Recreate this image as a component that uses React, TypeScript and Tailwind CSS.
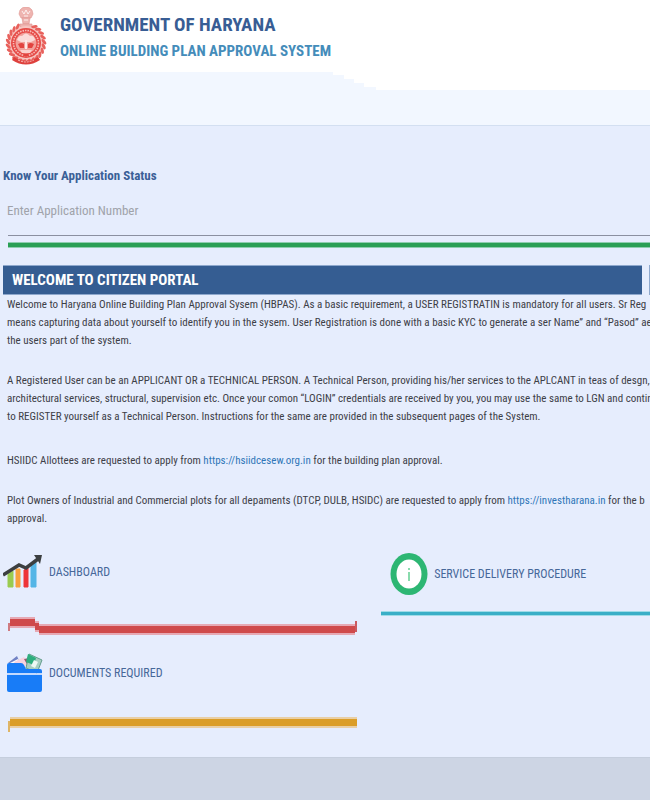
import React from "react";

function Emblem() {
  const leaves = Array.from({ length: 22 }, (_, i) => {
    const a = ((-62 + i * 14.5) * Math.PI) / 180;
    return { x: 21 + 18 * Math.cos(a), y: 36 + 18.5 * Math.sin(a), r: -62 + i * 14.5 + 55 };
  }).filter((l) => l.y > 19);
  return (
    <svg width="42" height="58" viewBox="0 0 42 58" role="img" aria-label="Haryana emblem">
      <g fill="#eeb4b0" stroke="#df9690" strokeWidth="0.6">
        <path d="M15 3q2-3 6-3t6 3l1 4-2 4H16l-2-4z" />
        <path d="M17 11h8l-1 6h-6z" />
        <path d="M15 17h12v3H15z" />
      </g>
      <path d="M17 4l2 3 2-4 2 4 2-3M19 9h4M19 13h4" stroke="#fff" strokeWidth="0.8" fill="none" />
      <circle cx="21" cy="37" r="18" fill="#f7c5c1" />
      <g fill="#e8615c">
        {leaves.map((l, i) => (
          <ellipse key={i} cx={l.x} cy={l.y} rx="3.2" ry="1.5" transform={`rotate(${l.r} ${l.x} ${l.y})`} />
        ))}
      </g>
      <circle cx="21" cy="36" r="15" fill="#e64b47" />
      <circle cx="21" cy="36" r="12.5" fill="none" stroke="#f7bcb8" strokeWidth="1.6" strokeDasharray="1.5 1" />
      <circle cx="21" cy="36" r="10.5" fill="#f2a09b" />
      <path d="M12 33q2-5 5-4 4-5 8 0 4-1 5 4l-4 2H16z" fill="#fbdcd9" />
      <path d="M13 37q4-2 6 0v4h-4zM29 37q-4-2-6 0v4h4z" fill="#e2433f" />
      <path d="M20 33h2v9h-2z" fill="#fde9e7" />
      <path d="M15 43h12l-2 3h-8z" fill="#fbd0cd" />
      <path d="M19 47h4v2h-4z" fill="#e2433f" />
      <path d="M9 50q12 8 24 0l2 3q-14 9-28 0z" fill="#de413d" />
      <path d="M13 53q8 4 16 0" stroke="#f9c2bf" strokeDasharray="2 1" fill="none" />
    </svg>
  );
}

function ChartIcon() {
  return (
    <svg width="40" height="34" viewBox="0 0 40 34" aria-hidden="true">
      <path d="M5 19l5-3v16H5z" fill="#9acb50" stroke="#9acb50" />
      <path d="M13 14h4v18h-4z" fill="#f8a13c" stroke="#f8a13c" />
      <path d="M21 15l4-2v19h-4z" fill="#ee3438" stroke="#ee3438" />
      <path d="M28 11l5-4v25h-5z" fill="#55b5e6" stroke="#55b5e6" />
      <path d="M0 20L16 10l7 3L35 4" fill="none" stroke="#3c3f40" strokeWidth="3.5" />
      <path d="M31 0h8l-2 9z" fill="#3c3f40" />
    </svg>
  );
}

function FolderIcon() {
  return (
    <svg width="38" height="40" viewBox="0 0 38 40" aria-hidden="true">
      <path d="M2 10l9-7 3 7z" fill="#7182c4" />
      <path d="M4 10l8-4 3 5z" fill="#fff" />
      <path d="M8 9l10-5 6 9H10z" fill="#f8d3df" />
      <path d="M18 6l5-1-1 8z" fill="#955b72" />
      <path d="M23 1l13 6-5 13-11-5z" fill="#a8cfc2" stroke="#669e8f" />
      <path d="M22 1l8 4-2 7-8-3z" fill="#2dae7e" />
      <path d="M28 7l4 2-3 6-4-2z" fill="#eef8f4" />
      <path d="M1 20V12q0-2 2-2h12q2 0 3 2l2 4h14q2 0 2 2v2z" fill="#187cf7" />
      <path d="M1 22h35v15q0 2-2 2H3q-2 0-2-2z" fill="#187cf7" />
      <path d="M1 21h35" stroke="#9fc5ff" strokeWidth="1.2" />
    </svg>
  );
}

function InfoIcon() {
  return (
    <svg width="38" height="42" viewBox="0 0 38 42" aria-hidden="true">
      <ellipse cx="19" cy="21" rx="18.5" ry="21" fill="#2db673" />
      <ellipse cx="19" cy="21" rx="12.5" ry="14.5" fill="#fff" />
      <path d="M19 15v2M19 19v9" stroke="#8adbad" strokeWidth="2" />
    </svg>
  );
}

const redEdge = "border-y-2 border-[#e6a9b4] bg-[#cf4a4b]";
const goldEdge = "border-y-2 border-[#e9cfa5] bg-[#db9d27]";

export default function App() {
  return (
    <div className="min-h-screen overflow-hidden bg-[#e6edfd] font-['Roboto_Condensed','Roboto',sans-serif] text-[#3d4047]">
      <header className="border-b border-[#d3dff1] bg-[#f2f7ff]">
        <div className="flex h-[72px] items-start gap-[13px] bg-white pl-[5px] pt-[7px]">
          <Emblem />
          <div className="whitespace-nowrap pt-1">
            <h1 className="text-[19px] font-bold leading-7 text-[#385d94]">GOVERNMENT OF HARYANA</h1>
            <p className="text-[15px] font-bold leading-6 text-[#448cba]">ONLINE BUILDING PLAN APPROVAL SYSTEM</p>
          </div>
        </div>
        <div className="flex h-[53px] items-start">
          <div className="w-[333px]" />
          <svg width="44" height="18" viewBox="0 0 44 18" aria-hidden="true">
            <path d="M0 0h44v18h-1v-3H31v-4H21V7H11V3H0z" fill="#fff" />
          </svg>
          <div className="h-[18px] flex-1 bg-white" />
        </div>
      </header>

      <main>
        <form className="pt-10">
          <label htmlFor="application" className="block pl-[3px] text-[13px] font-bold leading-5 text-[#3a6097]">
            Know Your Application Status
          </label>
          <div className="ml-2 border-b border-[#8b90a1] pb-3 pt-[11px]">
            <input
              id="application"
              type="text"
              placeholder="Enter Application Number"
              className="-ml-px block h-[26px] w-full bg-transparent text-[13px] outline-none placeholder:text-[#a0a3aa]"
            />
          </div>
        </form>
        <div className="ml-2 mt-1.5 h-1.5 border-y border-[#8fcdb0] bg-[#2a9f55]" />

        <div className="mt-[17px] flex gap-[7px] pl-[3px]">
          <h2 className="h-[30px] flex-1 border-y border-[#8ea8cd] bg-[#355d92] pl-[9px] text-[15px] font-bold leading-7 text-white">
            WELCOME TO CITIZEN PORTAL
          </h2>
          <div className="h-[30px] w-px bg-[#8ea8cd]" />
        </div>

        <div className="whitespace-nowrap pl-[7px] pt-px text-[11px] leading-[18px]">
          <p>
            Welcome to Haryana Online Building Plan Approval Sysem (HBPAS). As a basic requirement, a USER REGISTRATIN is mandatory for all users. Sr Reg
            <br />
            means capturing data about yourself to identify you in the sysem. User Registration is done with a basic KYC to generate a ser Name” and “Pasod” ae
            <br />
            the users part of the system.
          </p>
          <p className="mt-[22px]">
            A Registered User can be an APPLICANT OR a TECHNICAL PERSON. A Technical Person, providing his/her services to the APLCANT in teas of desgn,
            <br />
            architectural services, structural, supervision etc. Once your comon “LOGIN” credentials are received by you, you may use the same to LGN and contin
            <br />
            to REGISTER yourself as a Technical Person. Instructions for the same are provided in the subsequent pages of the System.
          </p>
          <p className="mt-[26px]">
            HSIIDC Allottees are requested to apply from{" "}
            <a href="#hsiidc" className="text-[#2f76b8]">https://hsiidcesew.org.in</a> for the building plan approval.
          </p>
          <p className="mt-[22px]">
            Plot Owners of Industrial and Commercial plots for all depaments (DTCP, DULB, HSIDC) are requested to apply from{" "}
            <a href="#invest" className="text-[#2f76b8]">https://investharana.in</a> for the b
            <br />
            approval.
          </p>
        </div>

        <div className="mt-[25px] grid grid-cols-12 text-xs text-[#466899]">
          <section className="col-span-7">
            <a href="#dashboard" className="flex h-[38px] items-center gap-1.5 pl-[3px]">
              <ChartIcon />
              DASHBOARD
            </a>
            <div className="ml-2 mr-[22px] mt-[26px] flex h-[18px] items-start">
              <div className="mt-1.5 h-2 w-0.5 bg-[#cf7a80]" />
              <div className={`h-[11px] w-[25px] ${redEdge}`} />
              <div className={`mt-1 h-[11px] w-1 ${redEdge}`} />
              <div className={`mt-[7px] h-[11px] flex-1 ${redEdge}`} />
              <div className="mt-1 h-[11px] w-0.5 bg-[#cb5a5f]" />
            </div>
            <a href="#documents" className="mt-[18px] flex h-10 items-center gap-[5px] pl-[6px]">
              <FolderIcon />
              DOCUMENTS REQUIRED
            </a>
            <div className="ml-2 mr-[22px] mt-6 flex h-[15px] items-start">
              <div className="mt-1 h-[11px] w-0.5 bg-[#dfb566]" />
              <div className={`h-[11px] flex-1 ${goldEdge}`} />
            </div>
          </section>
          <section className="col-span-5">
            <a href="#service" className="flex h-[42px] items-center gap-1.5 pl-[11px]">
              <InfoIcon />
              SERVICE DELIVERY PROCEDURE
            </a>
            <div className="ml-0.5 mt-4 h-[5px] border-y border-[#a0dce7] bg-[#3aafc7]" />
          </section>
        </div>
      </main>
      <footer className="mt-[25px] h-[43px] border-t border-[#c5cedd] bg-[#cdd5e4]" />
    </div>
  );
}
